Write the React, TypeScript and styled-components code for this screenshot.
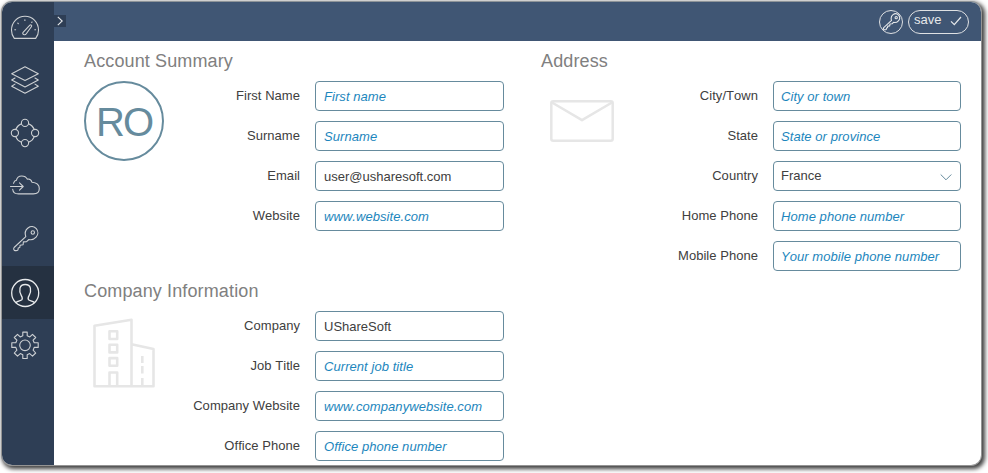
import React from 'react';
import styled, { createGlobalStyle, css } from 'styled-components';

const GlobalStyle = createGlobalStyle`
  * { box-sizing: border-box; }
  body {
    margin: 0;
    background: #fff;
    font-family: "Liberation Sans", Arial, Helvetica, sans-serif;
    font-kerning: none;
    overflow: hidden;
  }
  button, input { font-family: inherit; font-kerning: none; }
`;

const Stage = styled.div`
  width: 988px;
  height: 473px;
  padding: 1px 0 0 1px;
`;

const Window = styled.div`
  display: flex;
  width: 981px;
  height: 465px;
  border: 1px solid #949494;
  border-top-color: #8e9499;
  border-radius: 11px;
  overflow: hidden;
  background: #fff;
  box-shadow: 2px 2px 4px 1px rgba(0, 0, 0, 0.75);
`;

const Sidebar = styled.nav`
  display: flex;
  flex-direction: column;
  width: 52px;
  flex: none;
  background: #2e3e55;
`;

const NavItem = styled.a<{ $active?: boolean }>`
  display: flex;
  align-items: center;
  justify-content: center;
  height: 53px;
  padding: 0 6px ${(p) => (p.$active ? 0 : 2)}px 0;
  color: ${(p) => (p.$active ? '#e8eaec' : '#cdd0d3')};
  background: ${(p) => (p.$active ? '#253141' : 'transparent')};
  &:first-child { height: 52px; }
`;

const Main = styled.div`
  flex: 1;
  display: flex;
  flex-direction: column;
`;

const TopBar = styled.header`
  display: flex;
  align-items: center;
  height: 39px;
  flex: none;
  padding-right: 12px;
  background: #405674;
`;

const Toggle = styled.button`
  display: flex;
  align-items: center;
  justify-content: center;
  width: 12px;
  height: 12px;
  padding: 0;
  margin: 0 auto 1px 0;
  border: 0;
  color: #e6e8ea;
  background: #2e3e55;
`;

const pill = css`
  display: flex;
  align-items: center;
  height: 24px;
  border: 1px solid #dfe1e3;
  border-radius: 12px;
  background: transparent;
  color: #e6e8ea;
  padding: 0;
`;

const RoundButton = styled.button`
  ${pill}
  justify-content: center;
  width: 24px;
  margin-right: 5px;
`;

const SaveButton = styled.button`
  ${pill}
  width: 61px;
  padding: 0 6px 0 5px;
  justify-content: space-between;
  font-size: 13px;
  line-height: 18px;
  span { padding-bottom: 3px; }
  svg { margin-bottom: 1px; }
`;

const Form = styled.main`
  display: grid;
  grid-template-columns: 420px 420px;
  column-gap: 37px;
  align-items: start;
  padding-left: 30px;
`;

const Column = styled.div`
  display: flex;
  flex-direction: column;
  gap: 40px;
`;

const Heading = styled.h2`
  margin: 0;
  height: 40px;
  font-size: 18px;
  line-height: 40px;
  font-weight: 400;
  letter-spacing: 0.13px;
  color: #808080;
`;

const SectionBody = styled.div`
  display: flex;
  justify-content: space-between;
`;

const Emblem = styled.div<{ $left: number; $top: number }>`
  padding: ${(p) => p.$top}px 0 0 ${(p) => p.$left}px;
  svg { display: block; }
`;

const Avatar = styled.div`
  display: flex;
  align-items: center;
  justify-content: center;
  width: 80px;
  height: 80px;
  padding-top: 1px;
  border: 2px solid #668b9d;
  border-radius: 50%;
  color: #668b9d;
  font-size: 40px;
  line-height: 40px;
  letter-spacing: -2px;
`;

const Fields = styled.div`
  display: flex;
  flex-direction: column;
  gap: 10px;
`;

const Field = styled.label`
  display: flex;
  align-items: flex-start;
  justify-content: flex-end;
  gap: 15px;
`;

const FieldName = styled.span`
  font-size: 13px;
  line-height: 29px;
  color: #404040;
  letter-spacing: 0.04px;
`;

const box = css<{ $width: number }>`
  width: ${(p) => p.$width}px;
  height: 30px;
  border: 1px solid #668b9d;
  border-radius: 4px;
  background: #fff;
  font-size: 13px;
  color: #404040;
`;

const Input = styled.input<{ $width: number }>`
  ${box}
  padding: 1px 8px 0 ${(p) => (p.$width === 188 ? 7 : 8)}px;
  outline: 0;
  &::placeholder {
    color: #1c86bd;
    font-style: italic;
    letter-spacing: 0.06px;
    opacity: 1;
  }
`;

const Select = styled.div<{ $width: number }>`
  ${box}
  display: flex;
  align-items: center;
  justify-content: space-between;
  padding: 0 8px 0 7px;
  span { padding-bottom: 1px; }
  svg { margin-top: 2px; }
`;

type IconProps = { size?: number; weight?: number; children?: React.ReactNode };

const Icon = ({ size = 30, weight = 1.1, children }: IconProps) => (
  <svg width={size} height={size} viewBox="0 0 30 30" fill="none" stroke="currentColor"
    strokeWidth={weight} strokeLinejoin="round" strokeLinecap="round">
    {children}
  </svg>
);

const GaugeIcon = () => (
  <Icon>
    <path d="M4.3 26.4C2.4 24 1.5 21.2 1.5 18.2C1.5 10.3 7.3 4.3 15 4.3s13.5 6 13.5 13.9c0 3-.9 5.8-2.8 8.2z" />
    <path d="M13.1 20.3l6.8-7.2c.9-.8 2.3.4 1.6 1.4l-5.2 7.3c-1.4 1.9-4.7.4-3.2-1.5z" />
    <path d="M4.8 17.7h.8M7.8 11.2l.5.5M14.9 7.7v.8M21.7 10.4l.4-.4M24.8 17.7h.8" />
  </Icon>
);

const LayersIcon = () => (
  <Icon>
    <path d="M15 1.8L28.3 8.8 15 15.6 1.7 8.8z" />
    <path d="M5 13L1.7 15 15 22l13.3-7L25 13M5 19.1L1.7 21.2 15 28.2l13.3-7-3.3-2.1" />
  </Icon>
);

const RingIcon = () => (
  <Icon>
    <circle cx="15" cy="4.9" r="3.6" />
    <circle cx="15" cy="25.1" r="3.6" />
    <circle cx="4.9" cy="15" r="3.6" />
    <circle cx="25.1" cy="15" r="3.6" />
    <path d="M11.5 5.7A10 10 0 0 0 5.7 11.4M18.5 5.7A10 10 0 0 1 24.3 11.4M5.7 18.6A10 10 0 0 0 11.5 24.3M24.3 18.6A10 10 0 0 1 18.5 24.3" />
  </Icon>
);

const CloudIcon = () => (
  <Icon>
    <path d="M3.5 12.3C4 10.6 5 9.6 6.4 9.3 7 6.300 9.200 5 11.700 5c2.800 0 4.600 1.200 5.500 3.100 2.200-.3 4.200.9 4.700 3.100 4.200.4 7.400 2.700 7.400 6.300 0 3.500-2.500 5.400-6 5.400H8.500c-3.300 0-5.500-1.800-5.800-4.700" />
    <path d="M.5 15.500h12.600M9.500 11.900l3.700 3.600-3.700 3.600" />
  </Icon>
);

const KeyIcon = ({ size, weight }: IconProps) => (
  <Icon size={size} weight={weight}>
    <circle cx="22.800" cy="8.500" r="1.700" />
    <path d="M15.800 12.700C14.700 9.500 15.500 5.900 18 4c2.700-2.100 6.200-1.700 8.300.7 2.200 2.500 2 6.100-.2 8.500-2 2.200-4.600 2.900-7.200 2.300l-2.300 2.100-3.200.3-.3 2.900-3 .4-.3 2.300-1.600.5-.2 1.900c-.9.9-1.900.9-3.700.5-.9-1-.8-2.100-.2-2.900z" />
  </Icon>
);

const UserIcon = () => (
  <Icon weight={1.3}>
    <circle cx="15.2" cy="15" r="13.5" />
    <path d="M6 24.5c1.700-1.500 4.700-1.700 5.800-2.700 1.300-1.300.2-3-.6-4.400-1.200-2.200-1.700-5-1.200-7.200.6-2.500 2.500-3.700 5.200-3.700s4.600 1.200 5.200 3.700c.5 2.200 0 5-1.200 7.200-.8 1.400-1.900 3.100-.6 4.400 1.100 1 4.100 1.200 5.800 2.700" />
  </Icon>
);

const GearIcon = () => (
  <Icon>
    <circle cx="15" cy="15.300" r="5.300" />
    <path d="M12.800 2.100h4.400v3.700l2.600 1.100 2.700-2.600 3.200 3.200-2.600 2.700 1.100 2.600h4v4.600h-4l-1.100 2.800 2.600 2.800-3.200 3.100-2.800-2.500-2.500 1.100v3.800h-4.400v-3.800l-2.500-1.100-2.800 2.500-3.200-3.100 2.600-2.800-1.100-2.800h-4v-4.600h4l1.100-2.600-2.600-2.700L7.500 4.300l2.700 2.600 2.600-1.100z" />
  </Icon>
);

const EnvelopeIcon = () => (
  <svg width="64" height="42" viewBox="0 0 64 42" fill="none" stroke="#e6e6e6" strokeWidth="2.5" strokeLinejoin="round">
    <rect x="1.3" y="1.3" width="61.4" height="39.4" rx="2" />
    <path d="M2 2.5l30 17.7L62 2.5" />
  </svg>
);

const BuildingIcon = () => (
  <svg width="62" height="70" viewBox="0 0 62 70" fill="none" stroke="#e6e6e6" strokeWidth="2.6" strokeLinejoin="round">
    <path d="M1.500 68.200V7.700L38.500 1.800v66.400zM38.500 26.300l22 4.600v37.300h-22" />
    <path d="M16.500 13.300h7.700v7.700h-7.700zM16.500 26.700h7.700v7.700h-7.700zM16.500 40.100h7.700v7.700h-7.700zM16.500 68V54.500h7.700V68" />
    <path d="M49.300 38v7M49.300 48v7.500M49.300 60v8" />
  </svg>
);

type FieldDef = { name: string; hint?: string; value?: string; select?: boolean };

const FieldList = ({ items, width }: { items: FieldDef[]; width: number }) => (
  <Fields>
    {items.map((f) => (
      <Field key={f.name}>
        <FieldName>{f.name}</FieldName>
        {f.select ? (
          <Select $width={width}>
            <span>{f.value}</span>
            <svg width="12" height="8" viewBox="0 0 12 8" fill="none" stroke="#668b9d">
              <path d="M.7 1.5L6 6.8l5.3-5.3" />
            </svg>
          </Select>
        ) : (
          <Input $width={width} placeholder={f.hint} defaultValue={f.value} />
        )}
      </Field>
    ))}
  </Fields>
);

const account: FieldDef[] = [
  { name: 'First Name', hint: 'First name' },
  { name: 'Surname', hint: 'Surname' },
  { name: 'Email', value: 'user@usharesoft.com' },
  { name: 'Website', hint: 'www.website.com' },
];

const company: FieldDef[] = [
  { name: 'Company', value: 'UShareSoft' },
  { name: 'Job Title', hint: 'Current job title' },
  { name: 'Company Website', hint: 'www.companywebsite.com' },
  { name: 'Office Phone', hint: 'Office phone number' },
];

const address: FieldDef[] = [
  { name: 'City/Town', hint: 'City or town' },
  { name: 'State', hint: 'State or province' },
  { name: 'Country', value: 'France', select: true },
  { name: 'Home Phone', hint: 'Home phone number' },
  { name: 'Mobile Phone', hint: 'Your mobile phone number' },
];

export default function App() {
  return (
    <Stage>
      <GlobalStyle />
      <Window>
        <Sidebar>
          <NavItem><GaugeIcon /></NavItem>
          <NavItem><LayersIcon /></NavItem>
          <NavItem><RingIcon /></NavItem>
          <NavItem><CloudIcon /></NavItem>
          <NavItem><KeyIcon /></NavItem>
          <NavItem $active><UserIcon /></NavItem>
          <NavItem><GearIcon /></NavItem>
        </Sidebar>
        <Main>
          <TopBar>
            <Toggle>
              <svg width="6" height="10" viewBox="0 0 6 10" fill="none" stroke="currentColor" strokeWidth="1.1">
                <path d="M.8 .8L5.200 5 .8 9.200" />
              </svg>
            </Toggle>
            <RoundButton><KeyIcon size={20} weight={1.6} /></RoundButton>
            <SaveButton>
              <span>save</span>
              <svg width="12" height="10" viewBox="0 0 12 10" fill="none" stroke="currentColor" strokeWidth="1.2">
                <path d="M1 5.300l3.300 3.400L11 1" />
              </svg>
            </SaveButton>
          </TopBar>
          <Form>
            <Column>
              <section>
                <Heading>Account Summary</Heading>
                <SectionBody>
                  <Avatar>RO</Avatar>
                  <FieldList items={account} width={189} />
                </SectionBody>
              </section>
              <section>
                <Heading>Company Information</Heading>
                <SectionBody>
                  <Emblem $left={9} $top={7}><BuildingIcon /></Emblem>
                  <FieldList items={company} width={189} />
                </SectionBody>
              </section>
            </Column>
            <Column>
              <section>
                <Heading>Address</Heading>
                <SectionBody>
                  <Emblem $left={9} $top={19}><EnvelopeIcon /></Emblem>
                  <FieldList items={address} width={188} />
                </SectionBody>
              </section>
            </Column>
          </Form>
        </Main>
      </Window>
    </Stage>
  );
}
